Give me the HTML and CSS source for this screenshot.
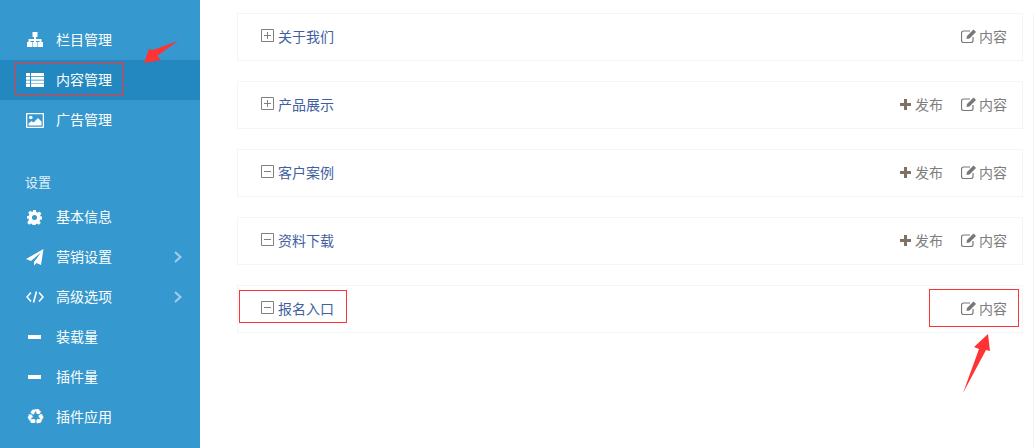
FILE: index.html
```html
<!doctype html>
<html lang="zh-CN">
  <head>
    <meta charset="UTF-8" />
    <title>内容管理</title>
    <link rel="stylesheet" href="styles.css">
  </head>
  <body>
    <div class="page">
      <nav class="sidebar">
        <ul class="menu menu-main">
          <li class="menu-item">
            <svg class="menu-icon" viewBox="0 0 18 16"><path d="M6.500 0h5v5H10v2h5.500v3H17v5h-5v-5h1.500V9H10v1h1.500v5h-5v-5H8V9H4.500v1H6v5H1v-5h1.500V7H8V5H6.500z"/></svg>
            <span class="menu-label">栏目管理</span>
          </li>
          <li class="menu-item active">
            <svg class="menu-icon" viewBox="0 0 18 14"><path d="M0 0h4v3H0zM5 0h13v3H5zM0 3.700h4v3H0zM5 3.700h13v3H5zM0 7.400h4v3H0zM5 7.400h13v3H5zM0 11h4v3H0zM5 11h13v3H5z"/></svg>
            <span class="menu-label">内容管理</span>
          </li>
          <li class="menu-item">
            <svg class="menu-icon" viewBox="0 0 18 15"><path fill-rule="evenodd" d="M1 0h16a1 1 0 0 1 1 1v13a1 1 0 0 1-1 1H1a1 1 0 0 1-1-1V1a1 1 0 0 1 1-1zm.3 1.300v12.400h15.400V1.300z"/><circle cx="4.800" cy="4.500" r="1.800"/><path d="M2.500 12.500v-2l3-2.500 2 1.500L12 5l3.500 3.500v4z"/></svg>
            <span class="menu-label">广告管理</span>
          </li>
        </ul>

        <div class="menu-title">设置</div>
        <ul class="menu">
          <li class="menu-item">
            <svg class="menu-icon icon-cog" viewBox="0 0 16 16"><path fill-rule="evenodd" d="M6.500 0h3l.4 2.200 1.400.6 1.900-1.300 2.100 2.100L14 5.500l.6 1.400 1.400.1v3l-2 .4-.6 1.400 1.300 1.900-2.100 2.100-1.900-1.300-1.400.6-.3 1.900h-3l-.4-2-1.400-.6-1.900 1.300-2.100-2.100L2 10.300l-.6-1.400L0 9.500v-3l2-.4.6-1.400-1.300-1.900L3.400.7l1.900 1.300 1-.4zM8 5.300a2.700 2.700 0 1 0 0 5.400 2.700 2.700 0 0 0 0-5.400z"/></svg>
            <span class="menu-label">基本信息</span>
          </li>
          <li class="menu-item">
            <svg class="menu-icon" viewBox="0 0 18 17"><path d="M17.500 0L0 10l5 2 10-8.500L8 13v3.500l2.500-2.500 4.500 2z"/></svg>
            <span class="menu-label">营销设置</span>
            <svg class="menu-arrow" viewBox="0 0 8 12"><path d="M1 1l5.500 5L1 11"/></svg>
          </li>
          <li class="menu-item">
            <svg class="menu-icon icon-line" viewBox="0 0 18 12"><path d="M5 1.500L1 6l4 4.500M13 1.500L17 6l-4 4.500M10.500 .5l-3 11"/></svg>
            <span class="menu-label">高级选项</span>
            <svg class="menu-arrow" viewBox="0 0 8 12"><path d="M1 1l5.500 5L1 11"/></svg>
          </li>
          <li class="menu-item">
            <svg class="menu-icon" viewBox="0 0 18 4"><path d="M2 0h13v4H2z"/></svg>
            <span class="menu-label">装载量</span>
          </li>
          <li class="menu-item">
            <svg class="menu-icon" viewBox="0 0 18 4"><path d="M2 0h13v4H2z"/></svg>
            <span class="menu-label">插件量</span>
          </li>
          <li class="menu-item">
            <span class="menu-glyph">♻</span>
            <span class="menu-label">插件应用</span>
          </li>
        </ul>
      </nav>

      <main class="content">
        <div class="row">
          <svg class="tree-toggle" viewBox="0 0 13 13"><path d="M.5 .5h12v12H.5zM3 6.500h7M6.500 3v7"/></svg>
          <a class="row-name">关于我们</a>
          <div class="row-actions">
            <a class="action">
              <svg class="action-icon" viewBox="0 0 15 14"><path class="edit-frame" d="M12 8v3.500a2 2 0 0 1-2 2H2.500a2 2 0 0 1-2-2V4a2 2 0 0 1 2-2H9"/><path d="M12.500 .5L15 3l-6.500 6.500-3 .5.500-3z"/></svg>
              内容
            </a>
          </div>
        </div>
        <div class="row">
          <svg class="tree-toggle" viewBox="0 0 13 13"><path d="M.5 .5h12v12H.5zM3 6.500h7M6.500 3v7"/></svg>
          <a class="row-name">产品展示</a>
          <div class="row-actions">
            <a class="action">
              <svg class="action-icon plus-icon" viewBox="0 0 11 11"><path d="M4 0h3v4h4v3H7v4H4V7H0V4h4z"/></svg>
              发布
            </a>
            <a class="action">
              <svg class="action-icon" viewBox="0 0 15 14"><path class="edit-frame" d="M12 8v3.500a2 2 0 0 1-2 2H2.500a2 2 0 0 1-2-2V4a2 2 0 0 1 2-2H9"/><path d="M12.500 .5L15 3l-6.500 6.500-3 .5.500-3z"/></svg>
              内容
            </a>
          </div>
        </div>
        <div class="row">
          <svg class="tree-toggle" viewBox="0 0 13 13"><path d="M.5 .5h12v12H.5zM3 6.500h7"/></svg>
          <a class="row-name">客户案例</a>
          <div class="row-actions">
            <a class="action">
              <svg class="action-icon plus-icon" viewBox="0 0 11 11"><path d="M4 0h3v4h4v3H7v4H4V7H0V4h4z"/></svg>
              发布
            </a>
            <a class="action">
              <svg class="action-icon" viewBox="0 0 15 14"><path class="edit-frame" d="M12 8v3.500a2 2 0 0 1-2 2H2.500a2 2 0 0 1-2-2V4a2 2 0 0 1 2-2H9"/><path d="M12.500 .5L15 3l-6.500 6.500-3 .5.500-3z"/></svg>
              内容
            </a>
          </div>
        </div>
        <div class="row">
          <svg class="tree-toggle" viewBox="0 0 13 13"><path d="M.5 .5h12v12H.5zM3 6.500h7"/></svg>
          <a class="row-name">资料下载</a>
          <div class="row-actions">
            <a class="action">
              <svg class="action-icon plus-icon" viewBox="0 0 11 11"><path d="M4 0h3v4h4v3H7v4H4V7H0V4h4z"/></svg>
              发布
            </a>
            <a class="action">
              <svg class="action-icon" viewBox="0 0 15 14"><path class="edit-frame" d="M12 8v3.500a2 2 0 0 1-2 2H2.500a2 2 0 0 1-2-2V4a2 2 0 0 1 2-2H9"/><path d="M12.500 .5L15 3l-6.500 6.500-3 .5.500-3z"/></svg>
              内容
            </a>
          </div>
        </div>
        <div class="row">
          <svg class="tree-toggle" viewBox="0 0 13 13"><path d="M.5 .5h12v12H.5zM3 6.500h7"/></svg>
          <a class="row-name">报名入口</a>
          <div class="row-actions">
            <a class="action">
              <svg class="action-icon" viewBox="0 0 15 14"><path class="edit-frame" d="M12 8v3.500a2 2 0 0 1-2 2H2.500a2 2 0 0 1-2-2V4a2 2 0 0 1 2-2H9"/><path d="M12.500 .5L15 3l-6.500 6.500-3 .5.500-3z"/></svg>
              内容
            </a>
          </div>
        </div>
      </main>

      <!-- edge of the next panel, cut off by the window -->
      <div class="edge"></div>

      <!-- red marks drawn over the screenshot -->
      <div class="mark mark-menu"></div>
      <div class="mark mark-name"></div>
      <div class="mark mark-action"></div>
      <svg class="mark-arrows" viewBox="0 0 1034 448">
        <path d="M178 41L153 50l-4-1-5 14 17-3-4-4z"/>
        <path d="M988 334L974 347l5 2-16 44 23-43 4 1z"/>
      </svg>
    </div>
  </body>
</html>
```

FILE: styles.css
```css
:root {
  --color-sidebar: #3598ce;
  --color-sidebar-active: #2288bf;
  --color-border: #f5f5f5;
  --color-link: #3f5f9f;
  --color-action: #7d7d7d;
  --color-mark: #ff3333;
  --font-sans: "Noto Sans CJK SC", "Liberation Sans", sans-serif;
}

html,
body {
  margin: 0;
  padding: 0;
  background: #fff;
}

body {
  font-family: var(--font-sans);
  font-size: 14px;
}

.page {
  position: relative;
  display: flex;
  width: 1034px;
  height: 448px;
  overflow: hidden;
}

/* sidebar */
.sidebar {
  flex: none;
  width: 200px;
  padding-top: 20px;
  box-sizing: border-box;
  background: var(--color-sidebar);
  color: #fff;
}

.menu {
  list-style: none;
  margin: 0;
  padding: 0;
}

.menu-main {
  margin-bottom: 32px;
}

.menu-title {
  height: 25px;
  padding-left: 25px;
  font-size: 13px;
  line-height: 20px;
  color: #e3f0f8;
}

.menu-item {
  display: flex;
  align-items: center;
  height: 40px;
  padding-left: 26px;
  line-height: 40px;
}

.menu-item.active {
  background: var(--color-sidebar-active);
}

.menu-label {
  margin-bottom: 2px;
}

.menu-icon {
  flex: none;
  width: 18px;
  margin-right: 12px;
  fill: #fff;
}

.icon-cog {
  width: 15px;
  margin-left: 1px;
  margin-right: 14px;
}

.icon-line {
  fill: none;
  stroke: #fff;
  stroke-width: 1.600;
}

.menu-glyph {
  flex: none;
  width: 18px;
  margin-right: 12px;
  font-family: "DejaVu Sans", sans-serif;
  font-size: 21px;
  text-align: center;
}

.menu-arrow {
  width: 8px;
  height: 12px;
  margin-left: auto;
  margin-right: 18px;
  fill: none;
  stroke: #a4cdea;
  stroke-width: 2;
}

/* tree rows */
.content {
  flex: 1;
  padding: 13px 11px 0 37px;
}

.row {
  display: flex;
  align-items: center;
  height: 48px;
  margin-bottom: 20px;
  padding: 0 15px 2px 23px;
  border: 1px solid var(--color-border);
  box-sizing: border-box;
}

.tree-toggle {
  flex: none;
  width: 13px;
  height: 13px;
  margin-right: 4px;
  margin-bottom: 2px;
  fill: none;
  stroke: #808080;
  stroke-width: 1;
}

.row-name {
  color: var(--color-link);
  font-size: 14px;
}

.row-actions {
  display: flex;
  gap: 18px;
  margin-left: auto;
}

.action {
  display: flex;
  align-items: center;
  color: var(--color-action);
}

.action-icon {
  width: 15px;
  height: 14px;
  margin-right: 3px;
  fill: #777;
}

.edit-frame {
  fill: none;
  stroke: #777;
  stroke-width: 1.200;
}

.plus-icon {
  width: 11px;
  height: 11px;
  margin-right: 4px;
  fill: #7f7264;
}

.edge {
  position: absolute;
  right: 0;
  top: 13px;
  bottom: 0;
  width: 1px;
  background: var(--color-border);
}

/* annotations */
.mark {
  position: absolute;
  box-sizing: border-box;
  border: 1px solid var(--color-mark);
}

.mark-menu {
  left: 15px;
  top: 62px;
  width: 109px;
  height: 33px;
}

.mark-name {
  left: 239px;
  top: 290px;
  width: 108px;
  height: 33px;
}

.mark-action {
  left: 929px;
  top: 289px;
  width: 90px;
  height: 38px;
}

.mark-arrows {
  position: absolute;
  left: 0;
  top: 0;
  width: 1034px;
  height: 448px;
  fill: var(--color-mark);
}
```
